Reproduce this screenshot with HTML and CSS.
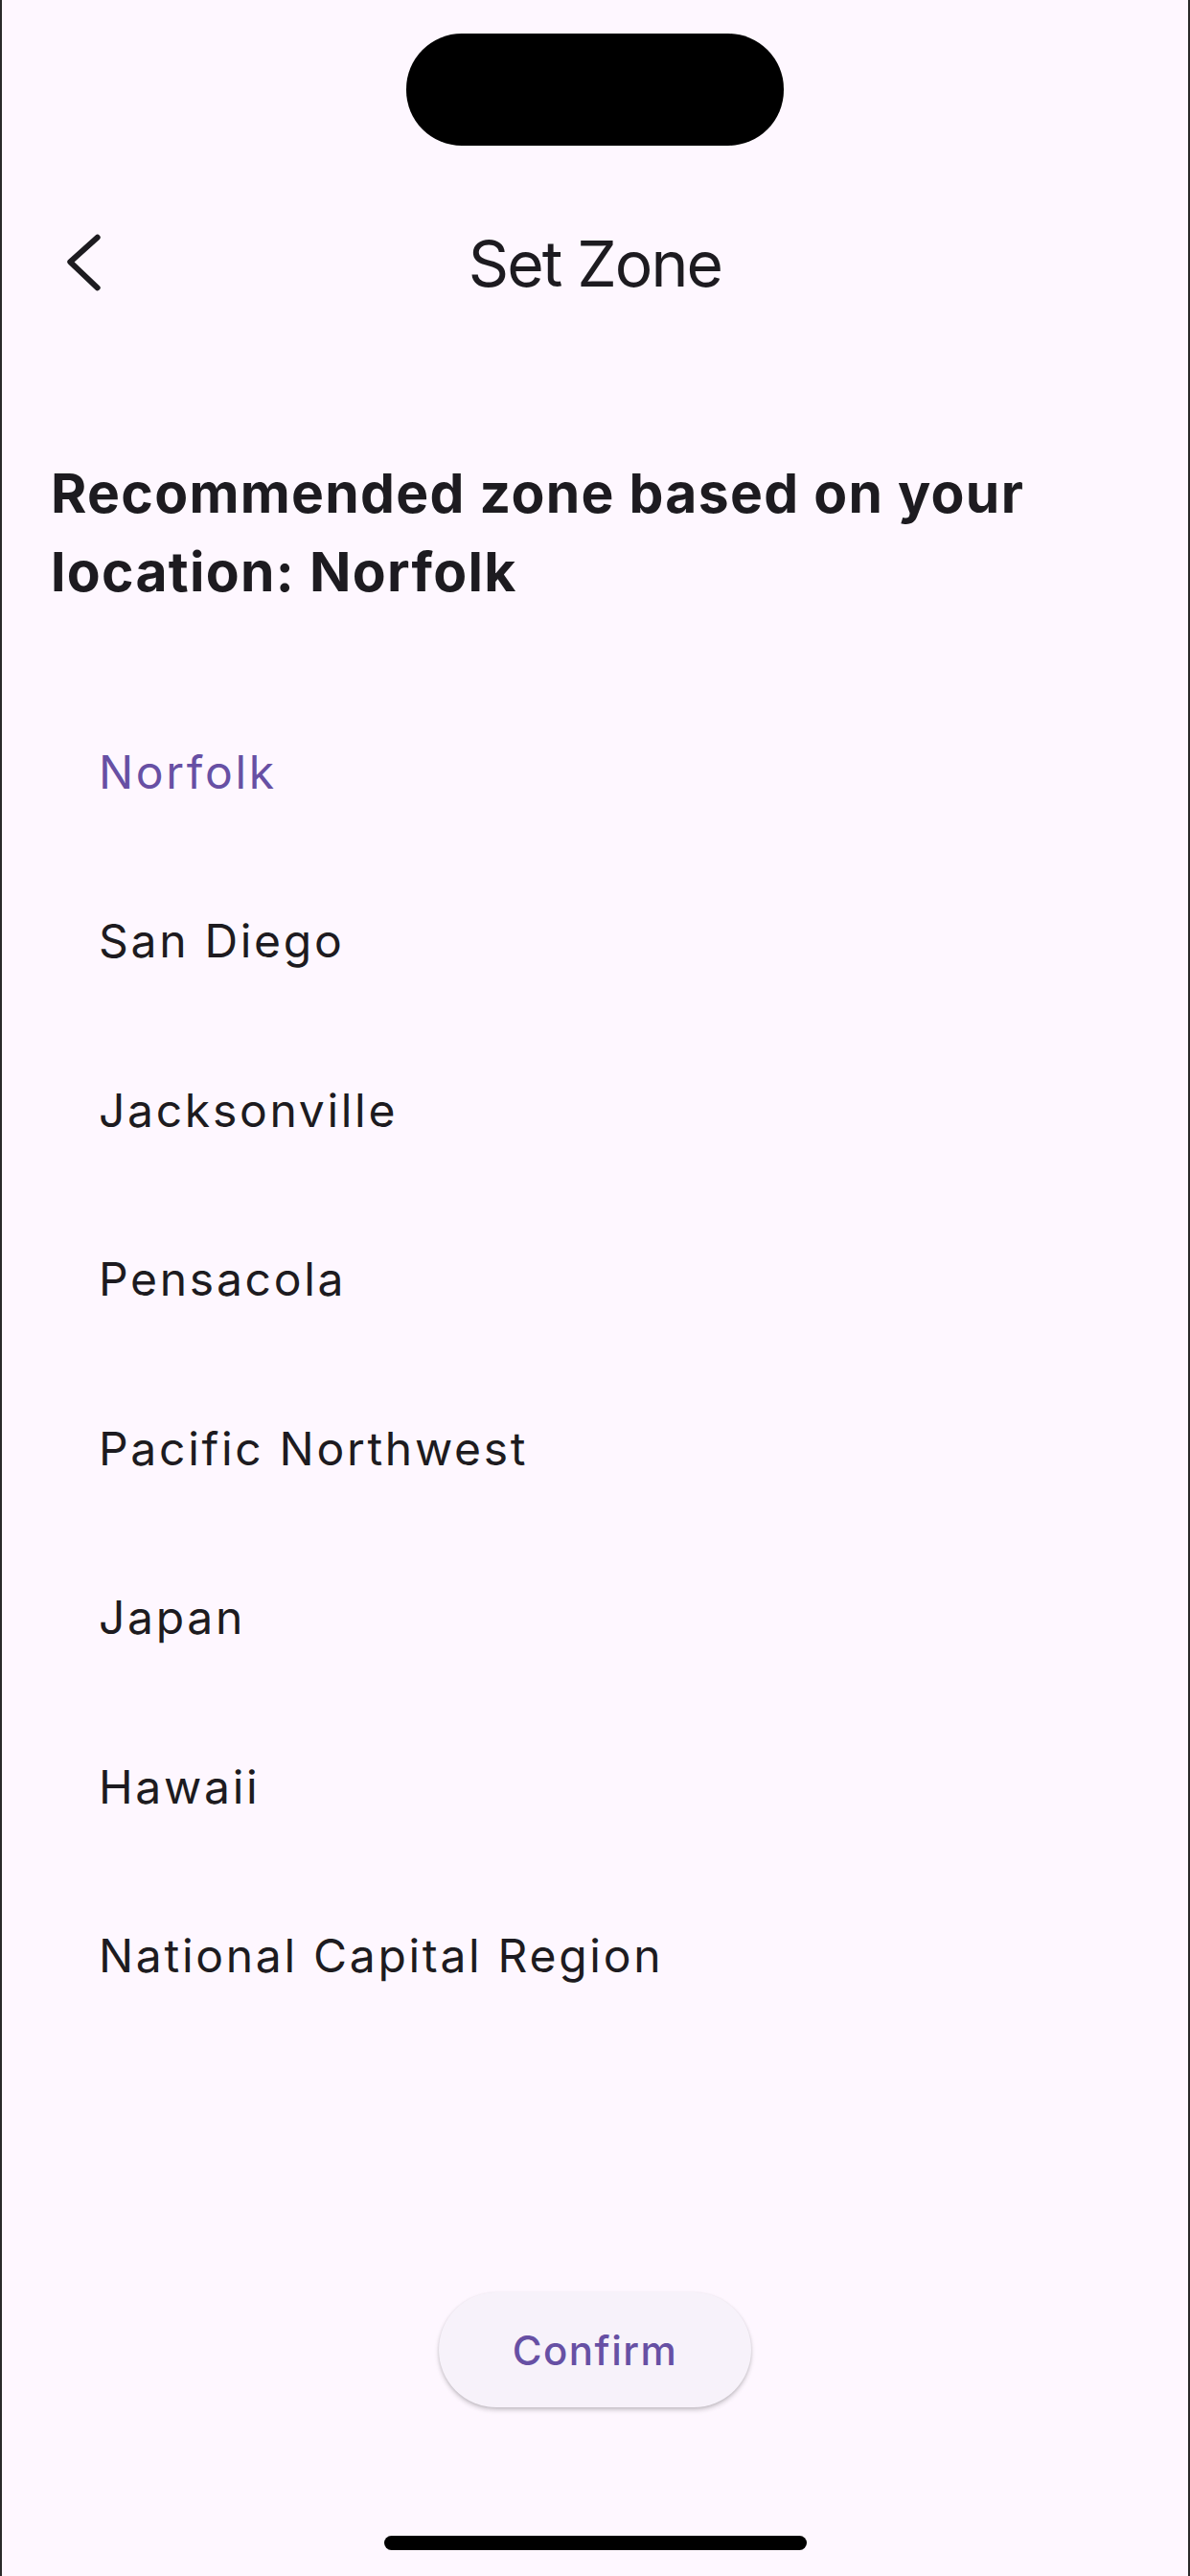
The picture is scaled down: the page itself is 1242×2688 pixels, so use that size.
FILE: index.html
```html
<!DOCTYPE html>
<html lang="en">
<head>
<meta charset="utf-8">
<title>Set Zone</title>
<link rel="stylesheet" href="styles.css">
</head>
<body>
<div class="screen">
  <div class="status">
    <div class="island"></div>
  </div>
  <header class="appbar">
    <button class="back" aria-label="Back">
      <svg width="48" height="68" viewBox="0 0 48 68"><polyline points="37.7,6.7 9.3,32.3 37.7,59.3" fill="none" stroke="#1d1b20" stroke-width="6" stroke-linecap="round" stroke-linejoin="round"/></svg>
    </button>
    <h1 class="title">Set Zone</h1>
    <div class="appbar-end"></div>
  </header>
  <p class="heading">Recommended zone based on your location: Norfolk</p>
  <ul class="zones">
    <li class="zone selected">Norfolk</li>
    <li class="zone">San Diego</li>
    <li class="zone">Jacksonville</li>
    <li class="zone">Pensacola</li>
    <li class="zone">Pacific Northwest</li>
    <li class="zone">Japan</li>
    <li class="zone">Hawaii</li>
    <li class="zone">National Capital Region</li>
  </ul>
  <footer class="footer">
    <button class="confirm">Confirm</button>
    <div class="home-indicator"></div>
  </footer>
</div>
</body>
</html>
```

FILE: styles.css
```css
* { box-sizing: border-box; }
html, body { margin: 0; padding: 0; }
body { background: #fef7ff; font-family: "Inter", "Noto Sans", sans-serif; color: #1d1b20; }
.screen {
  width: 1242px;
  height: 2688px;
  display: flex;
  flex-direction: column;
  background: #fef7ff;
  box-shadow: inset 2px 0 0 #2a2a2a, inset -2px 0 0 #2a2a2a;
}
.status { height: 177px; display: flex; justify-content: center; }
.island { margin-top: 35px; width: 394px; height: 117px; border-radius: 58px; background: #000; }
.appbar {
  height: 196px;
  display: grid;
  grid-template-columns: 1fr auto 1fr;
  align-items: center;
}
.back {
  justify-self: start;
  margin-left: 64px;
  padding: 0;
  border: 0;
  background: none;
  width: 48px;
  height: 68px;
  display: flex;
}
.title {
  margin: 0;
  font-size: 66px;
  line-height: 66px;
  font-weight: 400;
  letter-spacing: -1.9px;
  color: #1d1b20;
}
.heading {
  margin: 101px 0 0;
  padding: 0 40px 0 53px;
  font-size: 57px;
  line-height: 82px;
  font-weight: 700;
  letter-spacing: 1.3px;
  color: #1d1b20;
}
.zones { list-style: none; margin: 79px 0 0; padding: 0; }
.zone {
  height: 176.5px;
  display: flex;
  align-items: center;
  padding-left: 103px;
  font-size: 48px;
  letter-spacing: 2.7px;
  color: #1d1b20;
}
.zone.selected { color: #6750a4; }
.footer { margin-top: auto; display: flex; flex-direction: column; align-items: center; padding-bottom: 27px; }
.confirm {
  width: 326px;
  height: 120px;
  border: 0;
  border-radius: 60px;
  background: #f7f2fa;
  color: #6750a4;
  font-family: "Inter", "Noto Sans", sans-serif;
  font-size: 42px;
  font-weight: 500;
  letter-spacing: 1.5px;
  box-shadow: 0 3px 5px rgba(0,0,0,0.18), 0 1px 3px rgba(0,0,0,0.10);
}
.home-indicator { margin-top: 134px; width: 441px; height: 15px; border-radius: 8px; background: #000; }
```
